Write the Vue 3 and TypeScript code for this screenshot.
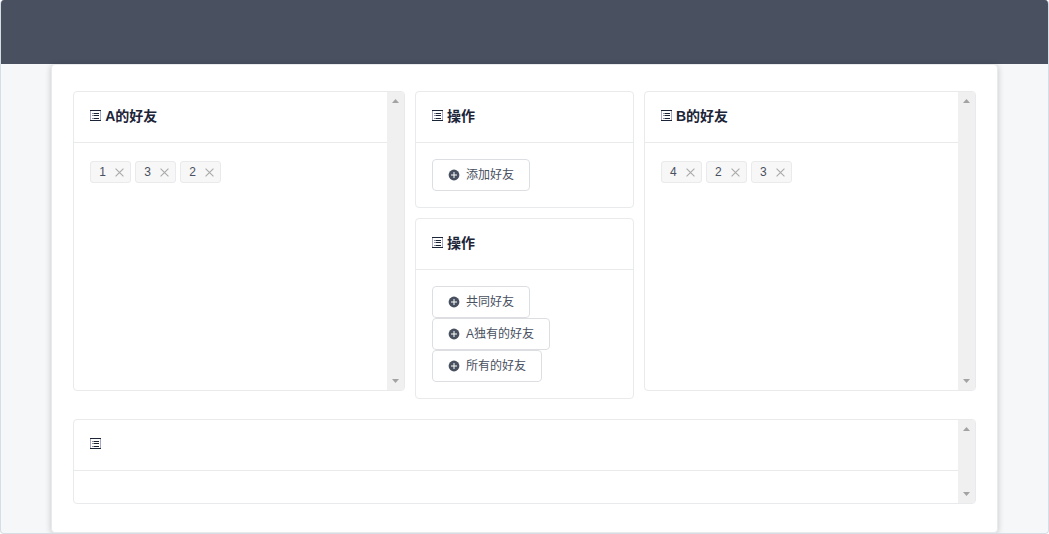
<script setup lang="ts">
import { ref } from 'vue'

const friendsA = ref<string[]>(['1', '3', '2'])
const friendsB = ref<string[]>(['4', '2', '3'])
const addActions: string[] = ['添加好友']
const queryActions: string[] = ['共同好友', 'A独有的好友', '所有的好友']

const groups = [
  { key: 'a', area: 'first', title: 'A的好友', list: friendsA },
  { key: 'b', area: 'last', title: 'B的好友', list: friendsB },
]
const panels = [
  { key: 'add', actions: addActions },
  { key: 'query', actions: queryActions },
]

function remove(list: { value: string[] }, name: string) {
  list.value = list.value.filter((n) => n !== name)
}
</script>

<template>
  <div class="layout">
    <header class="top"></header>
    <main class="sheet">
      <div class="row">
        <section v-for="g in groups" :key="g.key" class="card scroll" :class="g.area">
          <div class="main">
            <h2 class="head">
              <svg class="list-icon" viewBox="0 0 12 12" aria-hidden="true">
                <path class="side" d="M.5 1v10M10.5 1v10" />
                <path class="line" d="M0 .5h11M0 10.5h11M4 3.5h5M4 5.5h5M4 8.5h5" />
                <path class="dot" d="M2 3.5h2M2 5.5h2M2 8.5h2" />
              </svg>
              <span>{{ g.title }}</span>
            </h2>
            <div class="body tags">
              <span v-for="n in g.list.value" :key="n" class="tag">
                {{ n }}
                <button class="close" type="button" :aria-label="'移除 ' + n" @click="remove(g.list, n)">
                  <svg viewBox="0 0 8 8" aria-hidden="true"><path d="M.5.5l7 7M7.5.5l-7 7" /></svg>
                </button>
              </span>
            </div>
          </div>
          <div class="bar" aria-hidden="true">
            <svg viewBox="0 0 7 4"><path d="M0 4L3.5 0L7 4z" /></svg>
            <svg viewBox="0 0 7 4"><path d="M0 0L3.5 4L7 0z" /></svg>
          </div>
        </section>

        <div class="middle">
          <section v-for="p in panels" :key="p.key" class="card">
            <h2 class="head">
              <svg class="list-icon" viewBox="0 0 12 12" aria-hidden="true">
                <path class="side" d="M.5 1v10M10.5 1v10" />
                <path class="line" d="M0 .5h11M0 10.5h11M4 3.5h5M4 5.5h5M4 8.5h5" />
                <path class="dot" d="M2 3.5h2M2 5.5h2M2 8.5h2" />
              </svg>
              <span>操作</span>
            </h2>
            <div class="body actions">
              <button v-for="a in p.actions" :key="a" class="btn" type="button">
                <svg viewBox="0 0 12 12" aria-hidden="true">
                  <circle cx="6" cy="6" r="5.4" />
                  <path d="M6 3v6M3 6h6" />
                </svg>
                <span>{{ a }}</span>
              </button>
            </div>
          </section>
        </div>
      </div>

      <section class="card scroll result">
        <div class="main">
          <h2 class="head">
            <svg class="list-icon" viewBox="0 0 12 12" aria-hidden="true">
              <path class="side" d="M.5 1v10M10.5 1v10" />
              <path class="line" d="M0 .5h11M0 10.5h11M4 3.5h5M4 5.5h5M4 8.5h5" />
              <path class="dot" d="M2 3.5h2M2 5.5h2M2 8.5h2" />
            </svg>
          </h2>
          <div class="body"></div>
        </div>
        <div class="bar" aria-hidden="true">
          <svg viewBox="0 0 7 4"><path d="M0 4L3.5 0L7 4z" /></svg>
          <svg viewBox="0 0 7 4"><path d="M0 0L3.5 4L7 0z" /></svg>
        </div>
      </section>
    </main>
  </div>
</template>

<style>
body {
  margin: 0;
  background: #fff;
}
</style>

<style scoped>
.layout,
.layout * {
  box-sizing: border-box;
}
.layout {
  display: flex;
  flex-direction: column;
  min-height: 100vh;
  overflow: hidden;
  border: 1px solid #d7dde4;
  border-top: 0;
  border-radius: 4px;
  background: #f5f7f9;
  color: #495060;
  font: 12px/18px "Liberation Sans", "Noto Sans CJK SC", sans-serif;
}
.top {
  height: 64px;
  background: #495060;
}
.sheet {
  flex: 1;
  width: 90.4%;
  margin: 0 auto;
  padding: 26px 21px 28px;
  border: 1px solid #e9eaec;
  border-radius: 4px;
  background: #fff;
  box-shadow: 0 1px 6px rgba(0, 0, 0, 0.2);
}
.row {
  display: grid;
  grid-template-columns: 332fr 219fr 332fr;
  align-items: start;
  gap: 10px;
}
.card {
  border: 1px solid #e9eaec;
  border-radius: 4px;
  background: #fff;
  overflow: hidden;
}
.first,
.last {
  height: 300px;
}
.middle {
  order: 1;
  display: flex;
  flex-direction: column;
  gap: 10px;
}
.last {
  order: 2;
}
.scroll {
  display: flex;
}
.main {
  flex: 1;
  min-width: 0;
}
.head {
  display: flex;
  align-items: center;
  gap: 3px;
  height: 51px;
  margin: 0;
  padding: 0 16px 2px;
  border-bottom: 1px solid #e9eaec;
  color: #1c2438;
  font-size: 14px;
  line-height: 20px;
  font-weight: 700;
}
.list-icon {
  width: 12px;
  height: 12px;
  fill: none;
  stroke: #1c2438;
}
.list-icon .side {
  stroke: #a5a7c4;
}
.list-icon .dot {
  stroke: #8d919b;
}
.body {
  padding: 16px;
}
.tags {
  display: flex;
  flex-wrap: wrap;
  gap: 4px;
  padding-top: 18px;
}
.tag {
  display: flex;
  align-items: center;
  min-width: 41px;
  height: 22px;
  padding: 0 6px 0 8px;
  border: 1px solid #e9eaec;
  border-radius: 3px;
  background: #f7f7f7;
}
.close {
  display: flex;
  margin: 0 0 0 9px;
  padding: 1px 0 0;
  border: 0;
  background: none;
  cursor: pointer;
}
.close svg {
  width: 9px;
  height: 9px;
  stroke: #aaa;
}
.actions {
  display: flex;
  flex-direction: column;
  align-items: flex-start;
}
.btn {
  display: flex;
  align-items: center;
  gap: 6px;
  height: 32px;
  padding: 0 15px;
  border: 1px solid #dddee1;
  border-radius: 4px;
  background: #fff;
  color: #495060;
  font: inherit;
  cursor: pointer;
}
.btn svg {
  width: 12px;
  height: 12px;
  fill: #495060;
  stroke: #fff;
}
.btn circle {
  stroke: none;
}
.bar {
  display: flex;
  flex-direction: column;
  justify-content: space-between;
  align-items: center;
  width: 17px;
  padding: 7px 0;
  background: #f0f0f0;
}
.bar svg {
  width: 7px;
  height: 4px;
  fill: #a3a3a3;
}
.result {
  margin-top: 20px;
}
</style>
